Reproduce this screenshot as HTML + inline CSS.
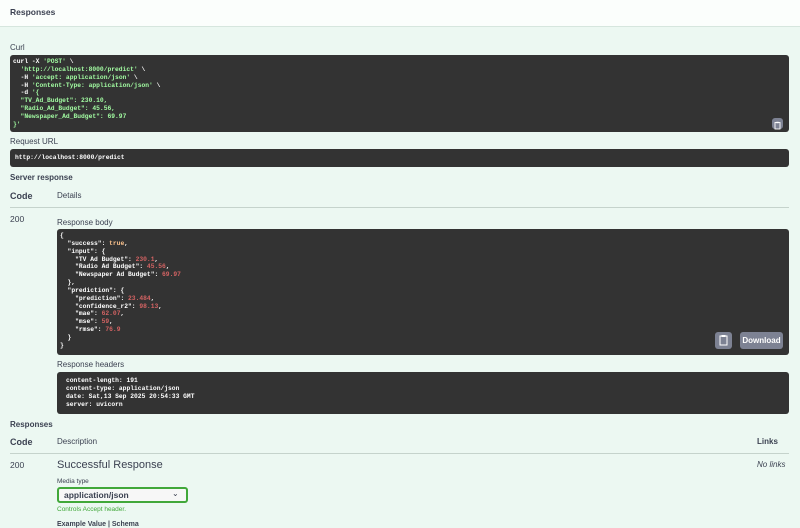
<!DOCTYPE html>
<html><head><meta charset="utf-8"><style>
*{margin:0;padding:0;box-sizing:border-box}
body{width:800px;height:525px;overflow:hidden;background:#ecf8f2;font-family:"Liberation Sans",sans-serif;color:#3b4151;position:relative}
.a{position:absolute;white-space:nowrap}
.hdr{left:0;top:0;width:800px;height:27px;background:#fbfefc;border-bottom:1px solid #d6e6de}
.lbl{font-size:8px;color:#3b4151}
.b{font-weight:bold}
.blk{background:#333;border-radius:3px}
pre,pre.a{white-space:pre;font-family:"Liberation Mono",monospace;font-size:6.3px;line-height:7.85px;font-weight:bold;color:#fff}
pre.g,.g{color:#a2fca2}.s{color:#fff}.n{color:#d36363}.k{color:#fcc28c}
.line{height:1px;background:#c5d3cc}
.btn{background:#7d8293;border-radius:3px}
</style></head><body>
<div class="a hdr"></div>
<div class="a b" style="left:10px;top:7px;font-size:8.5px">Responses</div>
<div class="a lbl" style="left:10px;top:43px">Curl</div>
<div class="a blk" style="left:10px;top:55px;width:779px;height:77px"></div>
<pre class="a g" style="left:13px;top:58px"><span class="s">curl -X </span>'POST'<span class="s"> \</span>
  'http://localhost:8000/predict'<span class="s"> \</span>
  <span class="s">-H</span> 'accept: application/json'<span class="s"> \</span>
  <span class="s">-H</span> 'Content-Type: application/json'<span class="s"> \</span>
  <span class="s">-d</span> '{
  "TV_Ad_Budget": 230.10,
  "Radio_Ad_Budget": 45.56,
  "Newspaper_Ad_Budget": 69.97
}'</pre>
<div class="a btn" style="left:772px;top:118px;width:11px;height:11px"><svg width="11" height="11" viewBox="0 0 11 11"><rect x="3" y="2.5" width="5" height="6.5" fill="none" stroke="#fff" stroke-width="0.9"/><rect x="4.3" y="1.8" width="2.4" height="1.4" fill="#fff"/></svg></div>
<div class="a lbl" style="left:10px;top:137px">Request URL</div>
<div class="a blk" style="left:10px;top:149px;width:779px;height:18px"></div>
<pre class="a" style="left:15px;top:154px">http://localhost:8000/predict</pre>
<div class="a lbl b" style="left:10px;top:173px;color:#3b4151">Server response</div>
<div class="a b" style="left:10px;top:191px;font-size:9px">Code</div>
<div class="a lbl" style="left:57px;top:191px">Details</div>
<div class="a line" style="left:10px;top:207px;width:779px"></div>
<div class="a" style="left:10px;top:214px;font-size:8.5px">200</div>
<div class="a lbl" style="left:57px;top:218px">Response body</div>
<div class="a blk" style="left:57px;top:229px;width:732px;height:126px"></div>
<pre class="a" style="left:60px;top:232px">{
  "success": <span class="k">true</span>,
  "input": {
    "TV Ad Budget": <span class="n">230.1</span>,
    "Radio Ad Budget": <span class="n">45.56</span>,
    "Newspaper Ad Budget": <span class="n">69.97</span>
  },
  "prediction": {
    "prediction": <span class="n">23.484</span>,
    "confidence_r2": <span class="n">98.13</span>,
    "mae": <span class="n">62.07</span>,
    "mse": <span class="n">59</span>,
    "rmse": <span class="n">76.9</span>
  }
}</pre>
<div class="a btn" style="left:715px;top:332px;width:17px;height:17px"><svg width="17" height="17" viewBox="0 0 17 17"><rect x="5" y="4" width="7" height="9" fill="none" stroke="#fff" stroke-width="1"/><rect x="6.5" y="3" width="4" height="2" fill="#fff"/></svg></div>
<div class="a btn b" style="left:740px;top:332px;width:43px;height:17px;color:#fff;font-size:8px;line-height:17px;text-align:center">Download</div>
<div class="a lbl" style="left:57px;top:360px">Response headers</div>
<div class="a blk" style="left:57px;top:372px;width:732px;height:42px"></div>
<pre class="a" style="left:66px;top:377px">content-length: 191
content-type: application/json
date: Sat,13 Sep 2025 20:54:33 GMT
server: uvicorn</pre>
<div class="a lbl b" style="left:10px;top:420px">Responses</div>
<div class="a b" style="left:10px;top:437px;font-size:9px">Code</div>
<div class="a lbl" style="left:57px;top:437px">Description</div>
<div class="a lbl b" style="left:757px;top:437px">Links</div>
<div class="a line" style="left:10px;top:453px;width:779px"></div>
<div class="a" style="left:10px;top:460px;font-size:8.5px">200</div>
<div class="a" style="left:57px;top:459px;font-size:11px">Successful Response</div>
<div class="a" style="left:757px;top:460px;font-size:8px;font-style:italic">No links</div>
<div class="a" style="left:57px;top:478px;font-size:6.5px">Media type</div>
<div class="a" style="left:57px;top:487px;width:131px;height:16px;border:2px solid #41a83a;border-radius:3px;background:#f7f7f7"></div>
<div class="a b" style="left:64px;top:490px;font-size:8.5px">application/json</div>
<div class="a" style="left:172px;top:489px;font-size:8px">&#8964;</div>
<div class="a" style="left:57px;top:506px;font-size:6.5px;color:#41a83a">Controls Accept header.</div>
<div class="a b" style="left:57px;top:521px;font-size:7px">Example Value | Schema</div>
</body></html>
